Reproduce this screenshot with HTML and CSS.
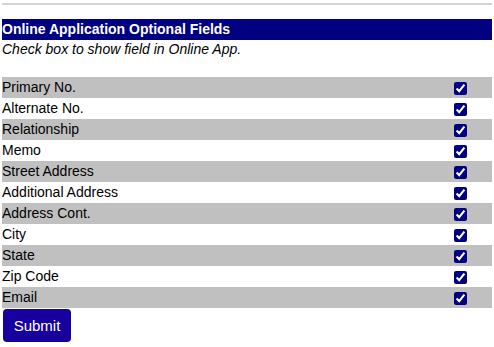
FILE: index.html
```html
<!DOCTYPE html>
<html lang="en">
<head>
    <meta charset="UTF-8">
    <title>Online Application Optional Fields</title>
    <link rel="stylesheet" href="styles.css">
</head>
<body>

<hr class="top-rule">

<form id="optional-fields">
    <div class="section-title">Online Application Optional Fields</div>
    <p class="hint">Check box to show field in Online App.</p>

    <table class="field-table">
        <tr class="shaded"><td>Primary No.</td><td class="check"><input type="checkbox" checked></td></tr>
        <tr><td>Alternate No.</td><td class="check"><input type="checkbox" checked></td></tr>
        <tr class="shaded"><td>Relationship</td><td class="check"><input type="checkbox" checked></td></tr>
        <tr><td>Memo</td><td class="check"><input type="checkbox" checked></td></tr>
        <tr class="shaded"><td>Street Address</td><td class="check"><input type="checkbox" checked></td></tr>
        <tr><td>Additional Address</td><td class="check"><input type="checkbox" checked></td></tr>
        <tr class="shaded"><td>Address Cont.</td><td class="check"><input type="checkbox" checked></td></tr>
        <tr><td>City</td><td class="check"><input type="checkbox" checked></td></tr>
        <tr class="shaded"><td>State</td><td class="check"><input type="checkbox" checked></td></tr>
        <tr><td>Zip Code</td><td class="check"><input type="checkbox" checked></td></tr>
        <tr class="shaded"><td>Email</td><td class="check"><input type="checkbox" checked></td></tr>
    </table>

    <button type="submit" class="submit-btn">Submit</button>
</form>

</body>
</html>
```

FILE: styles.css
```css
body {
    margin: 0 2px;
    font-family: "Liberation Sans", Arial, sans-serif;
    font-size: 14px;
    color: #000000;
    background-color: #ffffff;
}

.top-rule {
    margin: 3px 0 0 0;
    border: none;
    border-top: 2px solid #d3d3d3;
    height: 0;
}

#optional-fields {
    width: 490px;
    margin-top: 14px;
}

.section-title {
    background-color: #000080;
    color: #ffffff;
    font-weight: bold;
    height: 21px;
    line-height: 21px;
}

.hint {
    font-style: italic;
    margin: 0 0 19px 0;
    padding-top: 1px;
    line-height: 17px;
}

.field-table {
    width: 100%;
    border-collapse: collapse;
}

.field-table td {
    padding: 0;
    height: 21px;
    line-height: 21px;
}

.field-table tr.shaded {
    background-color: #c0c0c0;
}

.check {
    width: 38px;
    text-align: left;
}

.check input {
    margin: 0;
    width: 13px;
    height: 13px;
    vertical-align: middle;
    accent-color: #000080;
}

.submit-btn {
    margin: 1px 0 0 1px;
    width: 68px;
    height: 33px;
    background-color: #16009e;
    color: #ffffff;
    border: none;
    border-radius: 4px;
    font-family: "Liberation Sans", Arial, sans-serif;
    font-size: 15px;
}
```
